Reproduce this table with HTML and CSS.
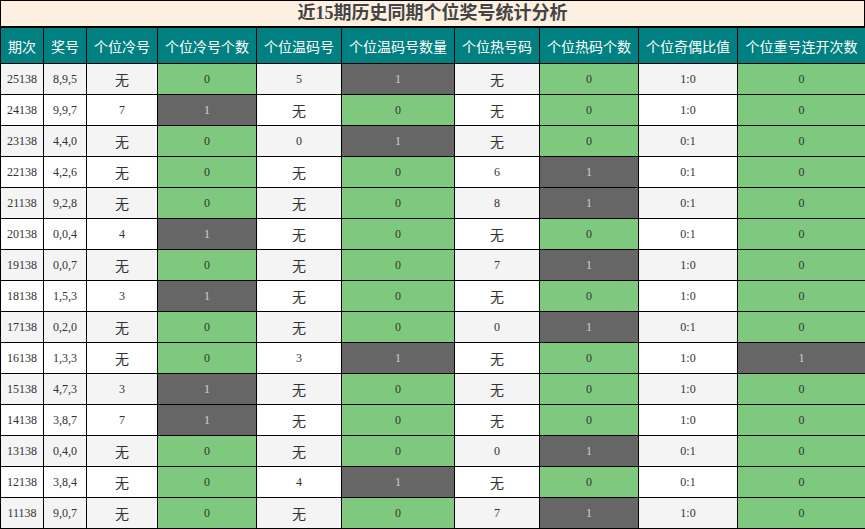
FILE: index.html
```html
<!DOCTYPE html>
<html lang="zh">
<head>
<meta charset="utf-8">
<title>近15期历史同期个位奖号统计分析</title>
<link rel="stylesheet" href="styles.css">
</head>
<body>
<div class="page">
  <div class="title">近15期历史同期个位奖号统计分析</div>
  <table class="stats">
    <colgroup>
      <col class="c43"><col class="c43"><col class="c71"><col class="c99"><col class="c85"><col class="c113"><col class="c85"><col class="c99"><col class="c99"><col class="c128">
    </colgroup>
    <thead>
      <tr>
        <th>期次</th><th>奖号</th><th>个位冷号</th><th>个位冷号个数</th><th>个位温码号</th><th>个位温码号数量</th><th>个位热号码</th><th>个位热码个数</th><th>个位奇偶比值</th><th>个位重号连开次数</th>
      </tr>
    </thead>
    <tbody>
      <tr><td>25138</td><td>8,9,5</td><td><span class="cn">无</span></td><td class="g">0</td><td>5</td><td class="d">1</td><td><span class="cn">无</span></td><td class="g">0</td><td>1:0</td><td class="g">0</td></tr>
      <tr><td>24138</td><td>9,9,7</td><td>7</td><td class="d">1</td><td><span class="cn">无</span></td><td class="g">0</td><td><span class="cn">无</span></td><td class="g">0</td><td>1:0</td><td class="g">0</td></tr>
      <tr><td>23138</td><td>4,4,0</td><td><span class="cn">无</span></td><td class="g">0</td><td>0</td><td class="d">1</td><td><span class="cn">无</span></td><td class="g">0</td><td>0:1</td><td class="g">0</td></tr>
      <tr><td>22138</td><td>4,2,6</td><td><span class="cn">无</span></td><td class="g">0</td><td><span class="cn">无</span></td><td class="g">0</td><td>6</td><td class="d">1</td><td>0:1</td><td class="g">0</td></tr>
      <tr><td>21138</td><td>9,2,8</td><td><span class="cn">无</span></td><td class="g">0</td><td><span class="cn">无</span></td><td class="g">0</td><td>8</td><td class="d">1</td><td>0:1</td><td class="g">0</td></tr>
      <tr><td>20138</td><td>0,0,4</td><td>4</td><td class="d">1</td><td><span class="cn">无</span></td><td class="g">0</td><td><span class="cn">无</span></td><td class="g">0</td><td>0:1</td><td class="g">0</td></tr>
      <tr><td>19138</td><td>0,0,7</td><td><span class="cn">无</span></td><td class="g">0</td><td><span class="cn">无</span></td><td class="g">0</td><td>7</td><td class="d">1</td><td>1:0</td><td class="g">0</td></tr>
      <tr><td>18138</td><td>1,5,3</td><td>3</td><td class="d">1</td><td><span class="cn">无</span></td><td class="g">0</td><td><span class="cn">无</span></td><td class="g">0</td><td>1:0</td><td class="g">0</td></tr>
      <tr><td>17138</td><td>0,2,0</td><td><span class="cn">无</span></td><td class="g">0</td><td><span class="cn">无</span></td><td class="g">0</td><td>0</td><td class="d">1</td><td>0:1</td><td class="g">0</td></tr>
      <tr><td>16138</td><td>1,3,3</td><td><span class="cn">无</span></td><td class="g">0</td><td>3</td><td class="d">1</td><td><span class="cn">无</span></td><td class="g">0</td><td>1:0</td><td class="d">1</td></tr>
      <tr><td>15138</td><td>4,7,3</td><td>3</td><td class="d">1</td><td><span class="cn">无</span></td><td class="g">0</td><td><span class="cn">无</span></td><td class="g">0</td><td>1:0</td><td class="g">0</td></tr>
      <tr><td>14138</td><td>3,8,7</td><td>7</td><td class="d">1</td><td><span class="cn">无</span></td><td class="g">0</td><td><span class="cn">无</span></td><td class="g">0</td><td>1:0</td><td class="g">0</td></tr>
      <tr><td>13138</td><td>0,4,0</td><td><span class="cn">无</span></td><td class="g">0</td><td><span class="cn">无</span></td><td class="g">0</td><td>0</td><td class="d">1</td><td>0:1</td><td class="g">0</td></tr>
      <tr><td>12138</td><td>3,8,4</td><td><span class="cn">无</span></td><td class="g">0</td><td>4</td><td class="d">1</td><td><span class="cn">无</span></td><td class="g">0</td><td>0:1</td><td class="g">0</td></tr>
      <tr><td>11138</td><td>9,0,7</td><td><span class="cn">无</span></td><td class="g">0</td><td><span class="cn">无</span></td><td class="g">0</td><td>7</td><td class="d">1</td><td>1:0</td><td class="g">0</td></tr>
    </tbody>
  </table>
</div>
</body>
</html>
```

FILE: styles.css
```css
html, body {
  margin: 0;
  padding: 0;
  background: #ffffff;
}

.page {
  width: 865px;
}

.title {
  box-sizing: border-box;
  height: 27px;
  border: 1px solid #000;
  border-bottom-width: 1px;
  background: #fdf0e1;
  color: #444;
  font-family: "Liberation Serif", "Noto Sans CJK SC", serif;
  font-weight: bold;
  font-size: 18px;
  line-height: 25px;
  text-align: center;
}

.stats {
  width: 865px;
  table-layout: fixed;
  border-collapse: collapse;
  font-family: "Liberation Serif", "Noto Sans CJK SC", serif;
  font-size: 12px;
  color: #333;
}

.c43 { width: 43px; }
.c71 { width: 71px; }
.c85 { width: 85px; }
.c99 { width: 99px; }
.c113 { width: 113px; }
.c128 { width: 128px; }

.stats th,
.stats td {
  border: 1px solid #000;
  padding: 0;
  text-align: center;
  vertical-align: middle;
}

.stats th {
  height: 35px;
  background: #008080;
  color: #fff;
  font-family: "Noto Sans CJK SC", sans-serif;
  font-weight: normal;
  font-size: 14px;
}

.stats td {
  height: 30px;
}

.stats tbody tr:nth-child(odd) td {
  background: #f4f4f4;
}

.stats tbody tr:nth-child(even) td {
  background: #ffffff;
}

.stats tbody tr td.g {
  background: #7fc97f;
  color: #333;
}

.stats tbody tr td.d {
  background: #666666;
  color: #d0d0d0;
}

.cn {
  font-family: "Noto Sans CJK SC", sans-serif;
  font-size: 14px;
}
```
